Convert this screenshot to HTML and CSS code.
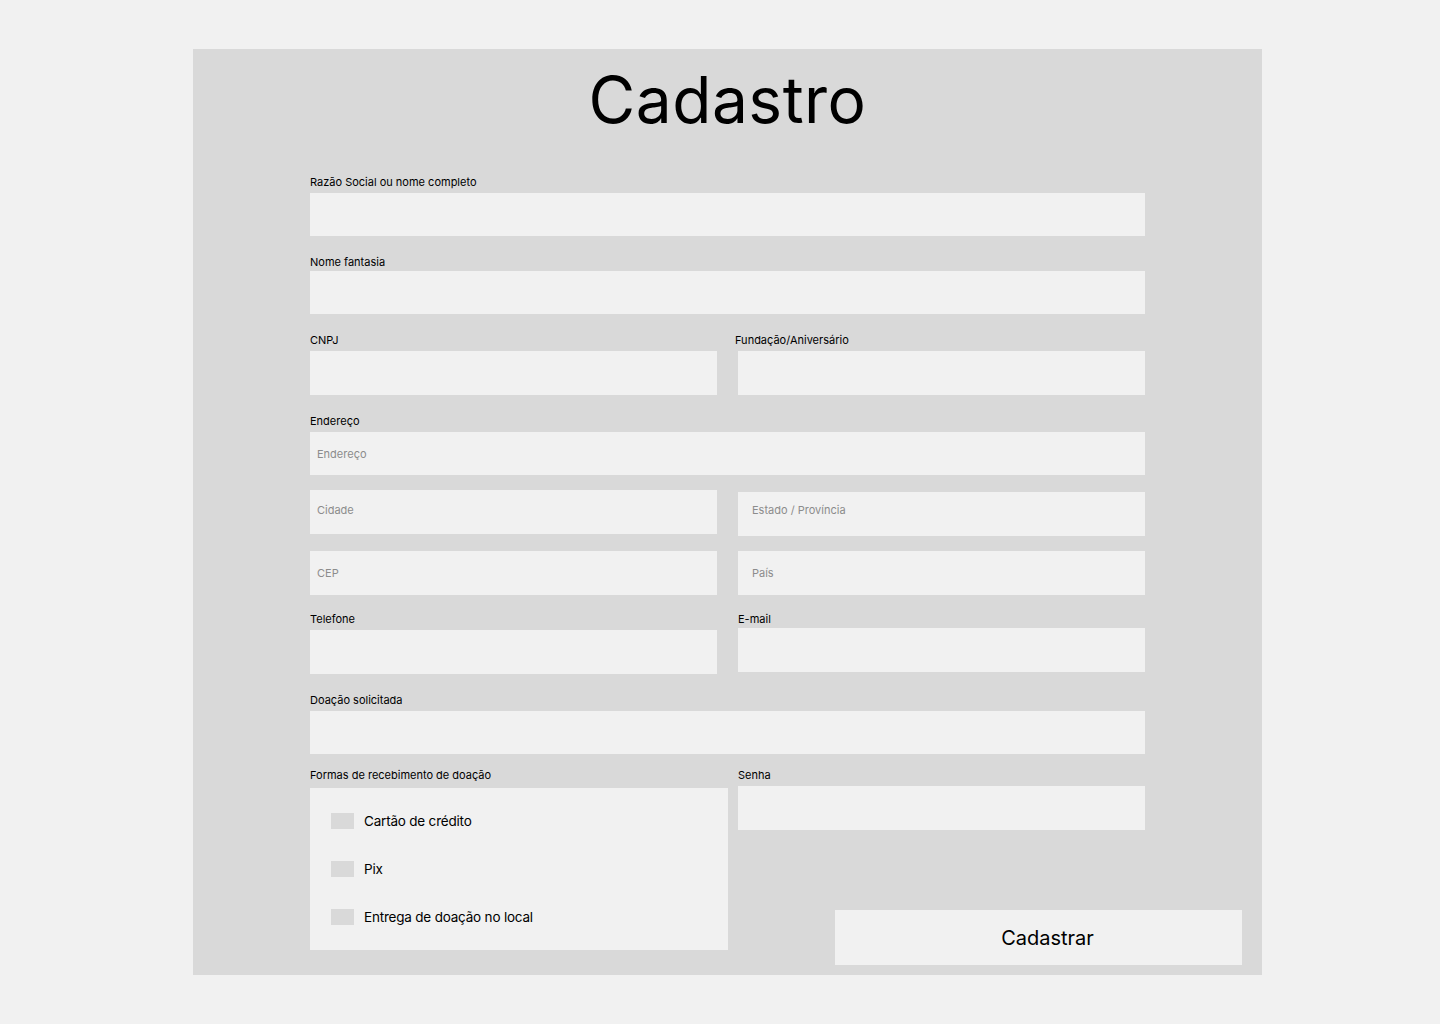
FILE: index.html
```html
<!DOCTYPE html>
<html lang="pt-BR">
<head>
  <meta charset="UTF-8" />
  <meta name="viewport" content="width=device-width, initial-scale=1" />
  <title>Cadastro</title>
  <link rel="stylesheet" href="styles.css">
</head>
<body>
  <main class="panel">
    <h1 class="title">Cadastro</h1>

    <form class="signup-form" onsubmit="return false;">
      <div class="field row-1">
        <label>Razão Social ou nome completo</label>
        <input type="text">
      </div>

      <div class="field row-2">
        <label class="label-tight">Nome fantasia</label>
        <input type="text">
      </div>

      <div class="pair row-3">
        <div class="field">
          <label>CNPJ</label>
          <input type="text" class="tall">
        </div>
        <div class="field">
          <label class="label-out">Fundação/Aniversário</label>
          <input type="text" class="tall">
        </div>
      </div>

      <div class="field row-4">
        <label>Endereço</label>
        <input type="text" class="ph-near" placeholder="Endereço">
      </div>

      <div class="pair row-5">
        <input type="text" class="tall ph-near ph-up" placeholder="Cidade">
        <input type="text" class="tall ph-far nudge" placeholder="Estado / Província">
      </div>

      <div class="pair row-6">
        <input type="text" class="tall ph-near" placeholder="CEP">
        <input type="text" class="tall ph-far" placeholder="País">
      </div>

      <div class="pair row-7">
        <div class="field">
          <label>Telefone</label>
          <input type="tel" class="tall">
        </div>
        <div class="field">
          <label class="label-tight">E-mail</label>
          <input type="email" class="tall">
        </div>
      </div>

      <div class="field row-8">
        <label>Doação solicitada</label>
        <input type="text">
      </div>

      <div class="bottom row-9">
        <div class="field">
          <label class="label-loose">Formas de recebimento de doação</label>
          <div class="options">
            <label class="option"><span class="check"></span>Cartão de crédito</label>
            <label class="option"><span class="check"></span>Pix</label>
            <label class="option"><span class="check"></span>Entrega de doação no local</label>
          </div>
        </div>
        <div class="side">
          <div class="field">
            <label>Senha</label>
            <input type="password" class="tall">
          </div>
          <button class="submit-btn" type="submit">Cadastrar</button>
        </div>
      </div>
    </form>
  </main>
</body>
</html>
```

FILE: styles.css
```css
body {
  margin: 0;
  background: #f1f1f1;
  font-family: Inter, 'Noto Sans', sans-serif;
  color: #000;
}

.panel {
  box-sizing: border-box;
  width: 1069px;
  height: 926px;
  margin: 49px 0 0 193px;
  padding-top: 19px;
  background: #d9d9d9;
}

.title {
  margin: 0;
  text-align: center;
  font-size: 64px;
  font-weight: 400;
  line-height: 64px;
  letter-spacing: 0.5px;
}

.signup-form {
  width: 835px;
  margin: 0 auto;
  display: flex;
  flex-direction: column;
}

/* label + input */
.field {
  display: flex;
  flex-direction: column;
}
.field > label {
  font-size: 11px;
  line-height: 14px;
  margin-bottom: 4px;
}
.field > label.label-tight { margin-bottom: 2px; }
.field > label.label-loose { margin-bottom: 6px; }
.field > label.label-out { margin-left: -3px; }

input {
  box-sizing: border-box;
  width: 100%;
  height: 43px;
  border: none;
  outline: none;
  background: #f1f1f1;
  padding: 0 7px;
  font-family: inherit;
  font-size: 11px;
  color: #000;
}
input.tall { height: 44px; }
input.ph-far { padding-left: 14px; }
input.ph-up { padding-bottom: 4px; }
input.nudge { margin-top: 2px; padding-bottom: 8px; }
input::placeholder { color: #8c8c8c; }

.pair {
  display: grid;
  grid-template-columns: 407px 407px;
  column-gap: 21px;
  align-items: start;
}

/* vertical rhythm between rows */
.row-1 { margin-top: 43px; }
.row-2 { margin-top: 19px; }
.row-3 { margin-top: 19px; }
.row-4 { margin-top: 19px; }
.row-5 { margin-top: 15px; }
.row-6 { margin-top: 15px; }
.row-7 { margin-top: 17px; }
.row-8 { margin-top: 19px; }
.row-9 { margin-top: 14px; }

.bottom {
  display: grid;
  grid-template-columns: 418px 407px;
  column-gap: 10px;
  align-items: start;
}

.options {
  box-sizing: border-box;
  height: 162px;
  padding: 21px 21px;
  background: #f1f1f1;
  display: flex;
  flex-direction: column;
  gap: 24px;
}
.option {
  display: flex;
  align-items: center;
  height: 24px;
  font-size: 13.5px;
  letter-spacing: -0.2px;
}
.check {
  width: 23px;
  height: 16px;
  margin-right: 10px;
  background: #d9d9d9;
}

.side {
  display: flex;
  flex-direction: column;
}

.submit-btn {
  width: 407px;
  height: 55px;
  margin: 80px 0 0 97px;
  padding: 0 0 0 18px;
  border: none;
  background: #f1f1f1;
  font-family: inherit;
  font-size: 20px;
  color: #000;
  cursor: pointer;
}
```
